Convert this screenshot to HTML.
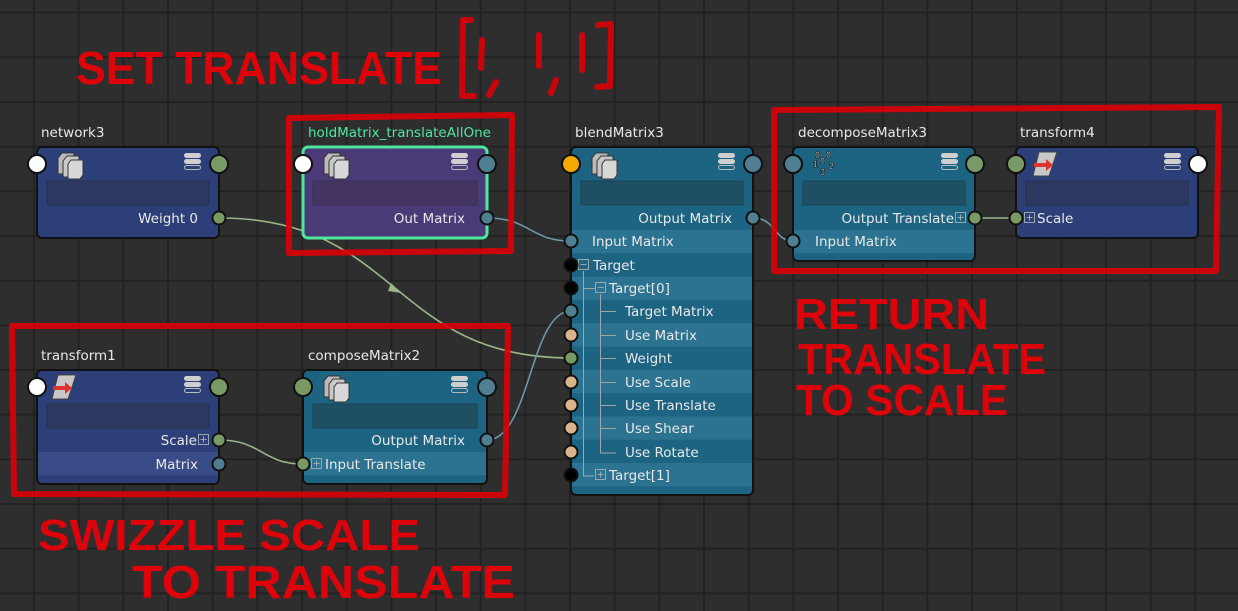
<!DOCTYPE html>
<html><head><meta charset="utf-8"><style>
html,body{margin:0;padding:0;background:#2e2e2e;width:1238px;height:611px;overflow:hidden}
svg{display:block}
.t{font-family:"DejaVu Sans","Liberation Sans",sans-serif;font-size:13.5px;fill:#e8e8e8}
.ann{font-family:"Liberation Sans",sans-serif;font-weight:bold;fill:#ee0008;fill-opacity:.92}
</style></head><body>
<svg width="1238" height="611" viewBox="0 0 1238 611" xmlns="http://www.w3.org/2000/svg">
<defs>
<pattern id="g" x="33" y="11.6" width="44.67" height="44.67" patternUnits="userSpaceOnUse">
<rect width="44.67" height="44.67" fill="#2e2e2e"/>
<rect x="0" y="0" width="2" height="44.67" fill="#222"/>
<rect x="0" y="0" width="44.67" height="2" fill="#222"/>
</pattern>
<g id="menu"><rect x="0" y="0" width="17" height="5" rx="2.5" fill="#cfcfcf"/><rect x="0" y="6" width="17" height="5" rx="2.5" fill="#cfcfcf"/><rect x="0.5" y="12.5" width="16" height="4" rx="2" fill="none" stroke="#bbb" stroke-width="1"/></g>
<g id="pages"><path d="M0,6 l4,-5 h12 v16 l-4,5 h-12z" fill="#bbb" stroke="#333" stroke-width="1"/><path d="M5,9 l4,-5 h12 v16 l-4,5 h-12z" fill="#c8c8c8" stroke="#333" stroke-width="1"/><path d="M10,12 l3,-4 h12 v15 l-3,4 h-12z" fill="#d8d8d8" stroke="#333" stroke-width="1"/></g>
<g id="xf"><path d="M6,0 h18 l-8,24 h-16z" fill="#c8c8c8" stroke="#444"/><path d="M1,11 h12 v-4 l7,6 l-7,6 v-4 h-12z" fill="#d33"/></g>
</defs>
<rect width="1238" height="611" fill="url(#g)"/>

<g fill="none" stroke-width="1.6">
<path d="M219,218 C400,218 390,358 571,358" stroke="#9ab58a"/>
<path d="M487,218 C530,218 530,241 571,241" stroke="#6d98a8"/>
<path d="M487,440 C530,440 530,311 571,311" stroke="#6d98a8"/>
<path d="M219,440 C262,440 262,464 303,464" stroke="#9ab58a"/>
<path d="M753,218 C776,218 774,241 793,241" stroke="#6d98a8"/>
<path d="M975,218 L1016,218" stroke="#9ab58a"/>
</g>
<path d="M391,283 l10,10 l-13,-2z" fill="#9ab58a"/>

<text class="t" x="41" y="137">network3</text>
<rect x="37" y="147" width="182" height="91" rx="5" fill="#2d3f78" stroke="#111" stroke-width="2"/>
<rect x="47" y="181" width="162" height="24" fill="#2c3860" stroke="#26304f"/>
<use href="#pages" x="58" y="152"/><use href="#menu" x="184" y="153"/>
<text class="t" x="198" y="223" text-anchor="end">Weight 0</text>
<circle cx="37" cy="164" r="9" fill="#fff" stroke="#111" stroke-width="2"/>
<circle cx="219" cy="164" r="9" fill="#7a9a65" stroke="#111" stroke-width="2"/>
<circle cx="219" cy="218" r="6.5" fill="#7a9a65" stroke="#111" stroke-width="2"/>

<text class="t" x="308" y="137" style="fill:#4de8a0">holdMatrix_translateAllOne</text>
<rect x="303" y="147" width="184" height="91" rx="5" fill="#4b3a78" stroke="#4de8a0" stroke-width="3"/>
<rect x="313" y="181" width="164" height="24" fill="#433462" stroke="#3a2e56"/>
<use href="#pages" x="324" y="152"/><use href="#menu" x="451" y="153"/>
<text class="t" x="465" y="223" text-anchor="end">Out Matrix</text>
<circle cx="303" cy="164" r="9" fill="#fff" stroke="#111" stroke-width="2"/>
<circle cx="487" cy="164" r="9" fill="#4f7f91" stroke="#111" stroke-width="2"/>
<circle cx="487" cy="218" r="6.5" fill="#4f7f91" stroke="#111" stroke-width="2"/>

<text class="t" x="575" y="137">blendMatrix3</text>
<rect x="571" y="147" width="182" height="348" rx="5" fill="#1d6482" stroke="#111" stroke-width="2"/>
<g fill="#2b7390">
<rect x="572" y="230" width="180" height="23.3"/><rect x="572" y="276.6" width="180" height="23.3"/>
<rect x="572" y="323.2" width="180" height="23.3"/><rect x="572" y="369.8" width="180" height="23.3"/>
<rect x="572" y="416.4" width="180" height="23.3"/><rect x="572" y="463" width="180" height="23.3"/>
</g>
<rect x="581" y="181" width="162" height="24" fill="#1f4f62" stroke="#1a4455"/>
<use href="#pages" x="592" y="152"/><use href="#menu" x="718" y="153"/>
<g stroke="#9aa8ae" stroke-width="1" fill="none">
<path d="M583.5,271 V476 H594"/><path d="M600.5,294 V453 H616"/>
<path d="M601,311.5 H616 M601,335.5 H616 M601,358.5 H616 M601,382.5 H616 M601,405.5 H616 M601,428.5 H616"/>
<path d="M583,288.5 H595"/>
<rect x="578.5" y="259.5" width="10" height="10"/><path d="M580.5,264.5 h6"/>
<rect x="595.5" y="282.5" width="10" height="10"/><path d="M597.5,287.5 h6"/>
<rect x="595.5" y="469.5" width="10" height="10"/><path d="M597.5,474.5 h6 M600.5,471.5 v6"/>
</g>
<g class="t">
<text x="732" y="223" text-anchor="end">Output Matrix</text>
<text x="592" y="246">Input Matrix</text>
<text x="593" y="270">Target</text>
<text x="609" y="293">Target[0]</text>
<text x="625" y="316">Target Matrix</text>
<text x="625" y="340">Use Matrix</text>
<text x="625" y="363">Weight</text>
<text x="625" y="387">Use Scale</text>
<text x="625" y="410">Use Translate</text>
<text x="625" y="433">Use Shear</text>
<text x="625" y="457">Use Rotate</text>
<text x="609" y="480">Target[1]</text>
</g>
<circle cx="571" cy="164" r="9" fill="#f5a800" stroke="#111" stroke-width="2"/>
<circle cx="753" cy="164" r="9" fill="#4f7f91" stroke="#111" stroke-width="2"/>
<g stroke="#111" stroke-width="2">
<circle cx="753" cy="218" r="6.5" fill="#4f7f91"/>
<circle cx="571" cy="241" r="6.5" fill="#4f7f91"/>
<circle cx="571" cy="265" r="6.5" fill="#000"/>
<circle cx="571" cy="288" r="6.5" fill="#000"/>
<circle cx="571" cy="311" r="6.5" fill="#4f7f91"/>
<circle cx="571" cy="335" r="6.5" fill="#d9b48a"/>
<circle cx="571" cy="358" r="6.5" fill="#7a9a65"/>
<circle cx="571" cy="382" r="6.5" fill="#d9b48a"/>
<circle cx="571" cy="405" r="6.5" fill="#d9b48a"/>
<circle cx="571" cy="428" r="6.5" fill="#d9b48a"/>
<circle cx="571" cy="452" r="6.5" fill="#d9b48a"/>
<circle cx="571" cy="475" r="6.5" fill="#000"/>
</g>

<text class="t" x="798" y="137">decomposeMatrix3</text>
<rect x="793" y="147" width="182" height="114" rx="5" fill="#1d6482" stroke="#111" stroke-width="2"/>
<rect x="794" y="230" width="180" height="23.3" fill="#2b7390"/>
<rect x="803" y="181" width="162" height="24" fill="#1f4f62" stroke="#1a4455"/>
<g font-family="Liberation Sans,sans-serif" font-size="9" font-weight="bold" fill="#ddd" stroke="#111" stroke-width=".6"><text x="815" y="158">0</text><text x="826" y="158">0</text><text x="813" y="167">1</text><text x="820" y="164">0</text><text x="829" y="169">2</text><text x="820" y="175">3</text></g>
<use href="#menu" x="941" y="153"/>
<text class="t" x="954" y="223" text-anchor="end">Output Translate</text>
<g stroke="#9aa8ae" fill="none"><rect x="955.5" y="212.5" width="10" height="10"/><path d="M957.5,217.5 h6 M960.5,214.5 v6"/></g>
<text class="t" x="815" y="246">Input Matrix</text>
<circle cx="793" cy="164" r="9" fill="#4f7f91" stroke="#111" stroke-width="2"/>
<circle cx="975" cy="164" r="9" fill="#7a9a65" stroke="#111" stroke-width="2"/>
<circle cx="975" cy="218" r="6.5" fill="#7a9a65" stroke="#111" stroke-width="2"/>
<circle cx="793" cy="241" r="6.5" fill="#4f7f91" stroke="#111" stroke-width="2"/>

<text class="t" x="1020" y="137">transform4</text>
<rect x="1016" y="147" width="182" height="91" rx="5" fill="#2d3f78" stroke="#111" stroke-width="2"/>
<rect x="1026" y="181" width="162" height="24" fill="#2c3860" stroke="#26304f"/>
<use href="#xf" x="1033" y="152"/><use href="#menu" x="1164" y="153"/>
<g stroke="#9aa8ae" fill="none"><rect x="1024.5" y="212.5" width="10" height="10"/><path d="M1026.5,217.5 h6 M1029.5,214.5 v6"/></g>
<text class="t" x="1037" y="223">Scale</text>
<circle cx="1016" cy="164" r="9" fill="#7a9a65" stroke="#111" stroke-width="2"/>
<circle cx="1198" cy="164" r="9" fill="#fff" stroke="#111" stroke-width="2"/>
<circle cx="1016" cy="218" r="6.5" fill="#7a9a65" stroke="#111" stroke-width="2"/>

<text class="t" x="41" y="360">transform1</text>
<rect x="37" y="370" width="182" height="114" rx="5" fill="#2d3f78" stroke="#111" stroke-width="2"/>
<rect x="38" y="452" width="180" height="23.3" fill="#3a4c88"/>
<rect x="47" y="404" width="162" height="24" fill="#2c3860" stroke="#26304f"/>
<use href="#xf" x="52" y="375"/><use href="#menu" x="184" y="376"/>
<text class="t" x="197" y="445" text-anchor="end">Scale</text>
<g stroke="#9aa8ae" fill="none"><rect x="198.5" y="434.5" width="10" height="10"/><path d="M200.5,439.5 h6 M203.5,436.5 v6"/></g>
<text class="t" x="198" y="469" text-anchor="end">Matrix</text>
<circle cx="37" cy="387" r="9" fill="#fff" stroke="#111" stroke-width="2"/>
<circle cx="219" cy="387" r="9" fill="#7a9a65" stroke="#111" stroke-width="2"/>
<circle cx="219" cy="440" r="6.5" fill="#7a9a65" stroke="#111" stroke-width="2"/>
<circle cx="219" cy="464" r="6.5" fill="#4f7f91" stroke="#111" stroke-width="2"/>

<text class="t" x="308" y="360">composeMatrix2</text>
<rect x="303" y="370" width="184" height="114" rx="5" fill="#1d6482" stroke="#111" stroke-width="2"/>
<rect x="304" y="452" width="182" height="23.3" fill="#2b7390"/>
<rect x="313" y="404" width="164" height="24" fill="#1f4f62" stroke="#1a4455"/>
<use href="#pages" x="324" y="375"/><use href="#menu" x="451" y="376"/>
<text class="t" x="465" y="445" text-anchor="end">Output Matrix</text>
<g stroke="#9aa8ae" fill="none"><rect x="311.5" y="458.5" width="10" height="10"/><path d="M313.5,463.5 h6 M316.5,460.5 v6"/></g>
<text class="t" x="325" y="469">Input Translate</text>
<circle cx="303" cy="387" r="9" fill="#7a9a65" stroke="#111" stroke-width="2"/>
<circle cx="487" cy="387" r="9" fill="#4f7f91" stroke="#111" stroke-width="2"/>
<circle cx="487" cy="440" r="6.5" fill="#4f7f91" stroke="#111" stroke-width="2"/>
<circle cx="303" cy="464" r="6.5" fill="#7a9a65" stroke="#111" stroke-width="2"/>

<g fill="none" stroke="#dd0008" stroke-opacity=".9" stroke-width="6" stroke-linecap="round" stroke-linejoin="round">
<path d="M289,118 L512,115 L511,251 L289,253 Z"/>
<path d="M774,110 L1219,107 L1216,271 L774,271 Z"/>
<path d="M12,326 L508,326 L505,495 L14,494 Z"/>
<path d="M471,20 L463,20 L462,96 L474,96"/>
<path d="M598,25 L611,24 L610,86 L597,87"/>
<path d="M482,40 L481,68 M496,82 L489,95 M539,35 L539,66 M556,80 L551,93 M582,35 L582,70"/>
</g>

<text class="ann" x="76" y="84" font-size="46" textLength="366" lengthAdjust="spacingAndGlyphs">SET TRANSLATE</text>
<text class="ann" x="794" y="329" font-size="44" textLength="195" lengthAdjust="spacingAndGlyphs">RETURN</text>
<text class="ann" x="798" y="374" font-size="44" textLength="248" lengthAdjust="spacingAndGlyphs">TRANSLATE</text>
<text class="ann" x="796" y="415" font-size="44" textLength="212" lengthAdjust="spacingAndGlyphs">TO SCALE</text>
<text class="ann" x="38" y="550" font-size="44" textLength="382" lengthAdjust="spacingAndGlyphs">SWIZZLE SCALE</text>
<text class="ann" x="132" y="598" font-size="46" textLength="383" lengthAdjust="spacingAndGlyphs">TO TRANSLATE</text>
</svg>
</body></html>
